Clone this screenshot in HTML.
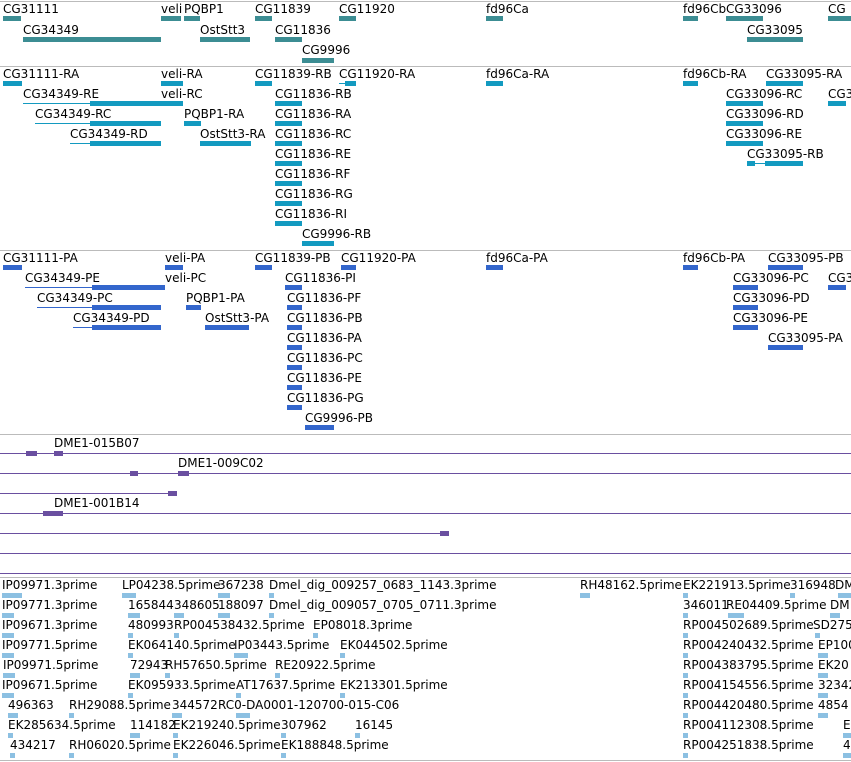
<!DOCTYPE html><html><head><meta charset="utf-8"><style>
body{margin:0;width:851px;height:762px;position:relative;background:#fff;overflow:hidden}
.t{position:absolute;font:12px/14px "DejaVu Sans","Liberation Sans",sans-serif;color:#000;white-space:nowrap}
.b{position:absolute;height:5px}
.g{background:#3c8d93}.r{background:#139ac0}.p{background:#3366cc}.v{background:#6a4fa0}.l{background:#8cc0e2}
.s{position:absolute;left:0;width:851px;height:1px;background:#bbb}
.h{position:absolute;left:0;width:851px;height:1px;background:#6a4fa0}
.n{position:absolute;height:1px}
</style></head><body>
<div class="s" style="top:1px"></div>
<div class="s" style="top:66px"></div>
<div class="s" style="top:250px"></div>
<div class="s" style="top:434px"></div>
<div class="s" style="top:577px"></div>
<div class="s" style="top:760px"></div>

<!-- track 1 -->
<div class="t" style="left:3px;top:2px">CG31111</div><div class="b g" style="left:3px;top:16px;width:18px"></div>
<div class="t" style="left:161px;top:2px">veli</div><div class="b g" style="left:161px;top:16px;width:20px"></div>
<div class="t" style="left:184px;top:2px">PQBP1</div><div class="b g" style="left:184px;top:16px;width:16px"></div>
<div class="t" style="left:255px;top:2px">CG11839</div><div class="b g" style="left:255px;top:16px;width:17px"></div>
<div class="t" style="left:339px;top:2px">CG11920</div><div class="b g" style="left:339px;top:16px;width:17px"></div>
<div class="t" style="left:486px;top:2px">fd96Ca</div><div class="b g" style="left:486px;top:16px;width:17px"></div>
<div class="t" style="left:683px;top:2px">fd96Cb</div><div class="b g" style="left:683px;top:16px;width:15px"></div>
<div class="t" style="left:726px;top:2px">CG33096</div><div class="b g" style="left:726px;top:16px;width:37px"></div>
<div class="t" style="left:828px;top:2px">CG</div><div class="b g" style="left:828px;top:16px;width:23px"></div>
<div class="t" style="left:23px;top:23px">CG34349</div><div class="b g" style="left:23px;top:37px;width:138px"></div>
<div class="t" style="left:200px;top:23px">OstStt3</div><div class="b g" style="left:200px;top:37px;width:50px"></div>
<div class="t" style="left:275px;top:23px">CG11836</div><div class="b g" style="left:275px;top:37px;width:27px"></div>
<div class="t" style="left:747px;top:23px">CG33095</div><div class="b g" style="left:747px;top:37px;width:56px"></div>
<div class="t" style="left:302px;top:43px">CG9996</div><div class="b g" style="left:302px;top:58px;width:32px"></div>

<!-- track 2 -->
<div class="t" style="left:3px;top:67px">CG31111-RA</div><div class="b r" style="left:3px;top:81px;width:19px"></div>
<div class="t" style="left:161px;top:67px">veli-RA</div><div class="b r" style="left:161px;top:81px;width:22px"></div>
<div class="t" style="left:255px;top:67px">CG11839-RB</div><div class="b r" style="left:255px;top:81px;width:17px"></div>
<div class="t" style="left:339px;top:67px">CG11920-RA</div><div class="n r" style="left:339px;top:83px;width:17px"></div><div class="b r" style="left:345px;top:81px;width:11px"></div>
<div class="t" style="left:486px;top:67px">fd96Ca-RA</div><div class="b r" style="left:486px;top:81px;width:17px"></div>
<div class="t" style="left:683px;top:67px">fd96Cb-RA</div><div class="b r" style="left:683px;top:81px;width:15px"></div>
<div class="t" style="left:766px;top:67px">CG33095-RA</div><div class="b r" style="left:766px;top:81px;width:37px"></div>
<div class="t" style="left:23px;top:87px">CG34349-RE</div><div class="n r" style="left:23px;top:103px;width:160px"></div><div class="b r" style="left:90px;top:101px;width:93px"></div>
<div class="t" style="left:161px;top:87px">veli-RC</div>
<div class="t" style="left:275px;top:87px">CG11836-RB</div><div class="b r" style="left:275px;top:101px;width:27px"></div>
<div class="t" style="left:726px;top:87px">CG33096-RC</div><div class="b r" style="left:726px;top:101px;width:37px"></div>
<div class="t" style="left:828px;top:87px">CG3</div><div class="b r" style="left:828px;top:101px;width:18px"></div>
<div class="t" style="left:35px;top:107px">CG34349-RC</div><div class="n r" style="left:35px;top:123px;width:126px"></div><div class="b r" style="left:90px;top:121px;width:71px"></div>
<div class="t" style="left:184px;top:107px">PQBP1-RA</div><div class="b r" style="left:184px;top:121px;width:17px"></div>
<div class="t" style="left:275px;top:107px">CG11836-RA</div><div class="b r" style="left:275px;top:121px;width:27px"></div>
<div class="t" style="left:726px;top:107px">CG33096-RD</div><div class="b r" style="left:726px;top:121px;width:37px"></div>
<div class="t" style="left:70px;top:127px">CG34349-RD</div><div class="n r" style="left:70px;top:143px;width:91px"></div><div class="b r" style="left:90px;top:141px;width:71px"></div>
<div class="t" style="left:200px;top:127px">OstStt3-RA</div><div class="b r" style="left:200px;top:141px;width:51px"></div>
<div class="t" style="left:275px;top:127px">CG11836-RC</div><div class="b r" style="left:275px;top:141px;width:27px"></div>
<div class="t" style="left:726px;top:127px">CG33096-RE</div><div class="b r" style="left:726px;top:141px;width:37px"></div>
<div class="t" style="left:275px;top:147px">CG11836-RE</div><div class="b r" style="left:275px;top:161px;width:27px"></div>
<div class="t" style="left:747px;top:147px">CG33095-RB</div><div class="n r" style="left:747px;top:163px;width:20px"></div><div class="b r" style="left:747px;top:161px;width:8px"></div><div class="b r" style="left:765px;top:161px;width:38px"></div>
<div class="t" style="left:275px;top:167px">CG11836-RF</div><div class="b r" style="left:275px;top:181px;width:27px"></div>
<div class="t" style="left:275px;top:187px">CG11836-RG</div><div class="b r" style="left:275px;top:201px;width:27px"></div>
<div class="t" style="left:275px;top:207px">CG11836-RI</div><div class="b r" style="left:275px;top:221px;width:27px"></div>
<div class="t" style="left:302px;top:227px">CG9996-RB</div><div class="b r" style="left:302px;top:241px;width:32px"></div>

<!-- track 3 -->
<div class="t" style="left:3px;top:251px">CG31111-PA</div><div class="b p" style="left:3px;top:265px;width:19px"></div>
<div class="t" style="left:165px;top:251px">veli-PA</div><div class="b p" style="left:165px;top:265px;width:18px"></div>
<div class="t" style="left:255px;top:251px">CG11839-PB</div><div class="b p" style="left:255px;top:265px;width:17px"></div>
<div class="t" style="left:341px;top:251px">CG11920-PA</div><div class="b p" style="left:341px;top:265px;width:15px"></div>
<div class="t" style="left:486px;top:251px">fd96Ca-PA</div><div class="b p" style="left:486px;top:265px;width:17px"></div>
<div class="t" style="left:683px;top:251px">fd96Cb-PA</div><div class="b p" style="left:683px;top:265px;width:15px"></div>
<div class="t" style="left:768px;top:251px">CG33095-PB</div><div class="b p" style="left:768px;top:265px;width:35px"></div>
<div class="t" style="left:25px;top:271px">CG34349-PE</div><div class="n p" style="left:25px;top:287px;width:140px"></div><div class="b p" style="left:92px;top:285px;width:73px"></div>
<div class="t" style="left:165px;top:271px">veli-PC</div>
<div class="t" style="left:285px;top:271px">CG11836-PI</div><div class="b p" style="left:285px;top:285px;width:17px"></div>
<div class="t" style="left:733px;top:271px">CG33096-PC</div><div class="b p" style="left:733px;top:285px;width:25px"></div>
<div class="t" style="left:828px;top:271px">CG3</div><div class="b p" style="left:828px;top:285px;width:18px"></div>
<div class="t" style="left:37px;top:291px">CG34349-PC</div><div class="n p" style="left:37px;top:307px;width:124px"></div><div class="b p" style="left:92px;top:305px;width:69px"></div>
<div class="t" style="left:186px;top:291px">PQBP1-PA</div><div class="b p" style="left:186px;top:305px;width:15px"></div>
<div class="t" style="left:287px;top:291px">CG11836-PF</div><div class="b p" style="left:287px;top:305px;width:15px"></div>
<div class="t" style="left:733px;top:291px">CG33096-PD</div><div class="b p" style="left:733px;top:305px;width:25px"></div>
<div class="t" style="left:73px;top:311px">CG34349-PD</div><div class="n p" style="left:73px;top:327px;width:88px"></div><div class="b p" style="left:92px;top:325px;width:69px"></div>
<div class="t" style="left:205px;top:311px">OstStt3-PA</div><div class="b p" style="left:205px;top:325px;width:44px"></div>
<div class="t" style="left:287px;top:311px">CG11836-PB</div><div class="b p" style="left:287px;top:325px;width:15px"></div>
<div class="t" style="left:733px;top:311px">CG33096-PE</div><div class="b p" style="left:733px;top:325px;width:25px"></div>
<div class="t" style="left:287px;top:331px">CG11836-PA</div><div class="b p" style="left:287px;top:345px;width:15px"></div>
<div class="t" style="left:768px;top:331px">CG33095-PA</div><div class="b p" style="left:768px;top:345px;width:35px"></div>
<div class="t" style="left:287px;top:351px">CG11836-PC</div><div class="b p" style="left:287px;top:365px;width:15px"></div>
<div class="t" style="left:287px;top:371px">CG11836-PE</div><div class="b p" style="left:287px;top:385px;width:15px"></div>
<div class="t" style="left:287px;top:391px">CG11836-PG</div><div class="b p" style="left:287px;top:405px;width:15px"></div>
<div class="t" style="left:305px;top:411px">CG9996-PB</div><div class="b p" style="left:305px;top:425px;width:29px"></div>

<!-- track 4 -->
<div class="h" style="top:453px"></div>
<div class="h" style="top:473px"></div>
<div class="h" style="top:493px;width:177px"></div>
<div class="h" style="top:513px"></div>
<div class="h" style="top:533px;width:449px"></div>
<div class="h" style="top:553px"></div>
<div class="h" style="top:573px"></div>
<div class="t" style="left:54px;top:436px">DME1-015B07</div>
<div class="t" style="left:178px;top:456px">DME1-009C02</div>
<div class="t" style="left:54px;top:496px">DME1-001B14</div>
<div class="b v" style="left:26px;top:451px;width:11px"></div>
<div class="b v" style="left:54px;top:451px;width:9px"></div>
<div class="b v" style="left:130px;top:471px;width:8px"></div>
<div class="b v" style="left:178px;top:471px;width:11px"></div>
<div class="b v" style="left:168px;top:491px;width:9px"></div>
<div class="b v" style="left:43px;top:511px;width:20px"></div>
<div class="b v" style="left:440px;top:531px;width:9px"></div>

<!-- track 5 -->
<div class="t" style="left:2px;top:578px">IP09971.3prime</div><div class="b l" style="left:2px;top:593px;width:20px"></div>
<div class="t" style="left:122px;top:578px">LP04238.5prime</div><div class="b l" style="left:122px;top:593px;width:14px"></div>
<div class="t" style="left:218px;top:578px">367238</div><div class="b l" style="left:218px;top:593px;width:12px"></div>
<div class="t" style="left:269px;top:578px">Dmel_dig_009257_0683_1143.3prime</div><div class="b l" style="left:269px;top:593px;width:5px"></div>
<div class="t" style="left:580px;top:578px">RH48162.5prime</div><div class="b l" style="left:580px;top:593px;width:10px"></div>
<div class="t" style="left:683px;top:578px">EK221913.5prime</div><div class="b l" style="left:683px;top:593px;width:5px"></div>
<div class="t" style="left:790px;top:578px">316948</div><div class="b l" style="left:790px;top:593px;width:5px"></div>
<div class="t" style="left:835px;top:578px">DM</div><div class="b l" style="left:838px;top:593px;width:13px"></div>

<div class="t" style="left:2px;top:598px">IP09771.3prime</div><div class="b l" style="left:2px;top:613px;width:12px"></div>
<div class="t" style="left:128px;top:598px">165844</div><div class="b l" style="left:128px;top:613px;width:12px"></div>
<div class="t" style="left:174px;top:598px">348605</div><div class="b l" style="left:174px;top:613px;width:10px"></div>
<div class="t" style="left:218px;top:598px">188097</div><div class="b l" style="left:218px;top:613px;width:12px"></div>
<div class="t" style="left:269px;top:598px">Dmel_dig_009057_0705_0711.3prime</div><div class="b l" style="left:269px;top:613px;width:5px"></div>
<div class="t" style="left:683px;top:598px">346011</div><div class="b l" style="left:683px;top:613px;width:5px"></div>
<div class="t" style="left:726px;top:598px">RE04409.5prime</div><div class="b l" style="left:728px;top:613px;width:16px"></div>
<div class="t" style="left:830px;top:598px">DM</div><div class="b l" style="left:830px;top:613px;width:10px"></div>

<div class="t" style="left:2px;top:618px">IP09671.3prime</div><div class="b l" style="left:2px;top:633px;width:12px"></div>
<div class="t" style="left:128px;top:618px">480993</div><div class="b l" style="left:128px;top:633px;width:5px"></div>
<div class="t" style="left:174px;top:618px">RP004538432.5prime</div><div class="b l" style="left:174px;top:633px;width:5px"></div>
<div class="t" style="left:313px;top:618px">EP08018.3prime</div><div class="b l" style="left:313px;top:633px;width:5px"></div>
<div class="t" style="left:683px;top:618px">RP004502689.5prime</div><div class="b l" style="left:683px;top:633px;width:5px"></div>
<div class="t" style="left:813px;top:618px">SD275</div><div class="b l" style="left:815px;top:633px;width:5px"></div>

<div class="t" style="left:2px;top:638px">IP09771.5prime</div><div class="b l" style="left:2px;top:653px;width:12px"></div>
<div class="t" style="left:128px;top:638px">EK064140.5prime</div><div class="b l" style="left:128px;top:653px;width:5px"></div>
<div class="t" style="left:234px;top:638px">IP03443.5prime</div><div class="b l" style="left:234px;top:653px;width:14px"></div>
<div class="t" style="left:340px;top:638px">EK044502.5prime</div><div class="b l" style="left:340px;top:653px;width:5px"></div>
<div class="t" style="left:683px;top:638px">RP004240432.5prime</div><div class="b l" style="left:683px;top:653px;width:5px"></div>
<div class="t" style="left:818px;top:638px">EP100</div><div class="b l" style="left:818px;top:653px;width:10px"></div>

<div class="t" style="left:3px;top:658px">IP09971.5prime</div><div class="b l" style="left:3px;top:673px;width:12px"></div>
<div class="t" style="left:130px;top:658px">72943</div><div class="b l" style="left:130px;top:673px;width:10px"></div>
<div class="t" style="left:165px;top:658px">RH57650.5prime</div><div class="b l" style="left:165px;top:673px;width:5px"></div>
<div class="t" style="left:275px;top:658px">RE20922.5prime</div><div class="b l" style="left:275px;top:673px;width:5px"></div>
<div class="t" style="left:683px;top:658px">RP004383795.5prime</div><div class="b l" style="left:683px;top:673px;width:5px"></div>
<div class="t" style="left:818px;top:658px">EK20</div><div class="b l" style="left:818px;top:673px;width:10px"></div>

<div class="t" style="left:2px;top:678px">IP09671.5prime</div><div class="b l" style="left:2px;top:693px;width:12px"></div>
<div class="t" style="left:128px;top:678px">EK095933.5prime</div><div class="b l" style="left:128px;top:693px;width:5px"></div>
<div class="t" style="left:236px;top:678px">AT17637.5prime</div><div class="b l" style="left:236px;top:693px;width:5px"></div>
<div class="t" style="left:340px;top:678px">EK213301.5prime</div><div class="b l" style="left:340px;top:693px;width:5px"></div>
<div class="t" style="left:683px;top:678px">RP004154556.5prime</div><div class="b l" style="left:683px;top:693px;width:5px"></div>
<div class="t" style="left:818px;top:678px">32342</div><div class="b l" style="left:818px;top:693px;width:10px"></div>

<div class="t" style="left:8px;top:698px">496363</div><div class="b l" style="left:8px;top:713px;width:10px"></div>
<div class="t" style="left:69px;top:698px">RH29088.5prime</div><div class="b l" style="left:69px;top:713px;width:5px"></div>
<div class="t" style="left:172px;top:698px">344572</div><div class="b l" style="left:172px;top:713px;width:10px"></div>
<div class="t" style="left:218px;top:698px">RC0-DA0001-120700-015-C06</div><div class="b l" style="left:236px;top:713px;width:14px"></div>
<div class="t" style="left:683px;top:698px">RP004420480.5prime</div><div class="b l" style="left:683px;top:713px;width:5px"></div>
<div class="t" style="left:818px;top:698px">4854</div><div class="b l" style="left:818px;top:713px;width:10px"></div>

<div class="t" style="left:8px;top:718px">EK285634.5prime</div><div class="b l" style="left:8px;top:733px;width:5px"></div>
<div class="t" style="left:130px;top:718px">114182</div><div class="b l" style="left:130px;top:733px;width:10px"></div>
<div class="t" style="left:173px;top:718px">EK219240.5prime</div><div class="b l" style="left:173px;top:733px;width:5px"></div>
<div class="t" style="left:281px;top:718px">307962</div><div class="b l" style="left:281px;top:733px;width:5px"></div>
<div class="t" style="left:355px;top:718px">16145</div><div class="b l" style="left:355px;top:733px;width:5px"></div>
<div class="t" style="left:683px;top:718px">RP004112308.5prime</div><div class="b l" style="left:683px;top:733px;width:5px"></div>
<div class="t" style="left:843px;top:718px">E</div><div class="b l" style="left:843px;top:733px;width:8px"></div>

<div class="t" style="left:10px;top:738px">434217</div><div class="b l" style="left:10px;top:753px;width:5px"></div>
<div class="t" style="left:69px;top:738px">RH06020.5prime</div><div class="b l" style="left:69px;top:753px;width:5px"></div>
<div class="t" style="left:173px;top:738px">EK226046.5prime</div><div class="b l" style="left:173px;top:753px;width:5px"></div>
<div class="t" style="left:281px;top:738px">EK188848.5prime</div><div class="b l" style="left:281px;top:753px;width:5px"></div>
<div class="t" style="left:683px;top:738px">RP004251838.5prime</div><div class="b l" style="left:683px;top:753px;width:5px"></div>
<div class="t" style="left:843px;top:738px">4</div><div class="b l" style="left:843px;top:753px;width:8px"></div>
</body></html>
